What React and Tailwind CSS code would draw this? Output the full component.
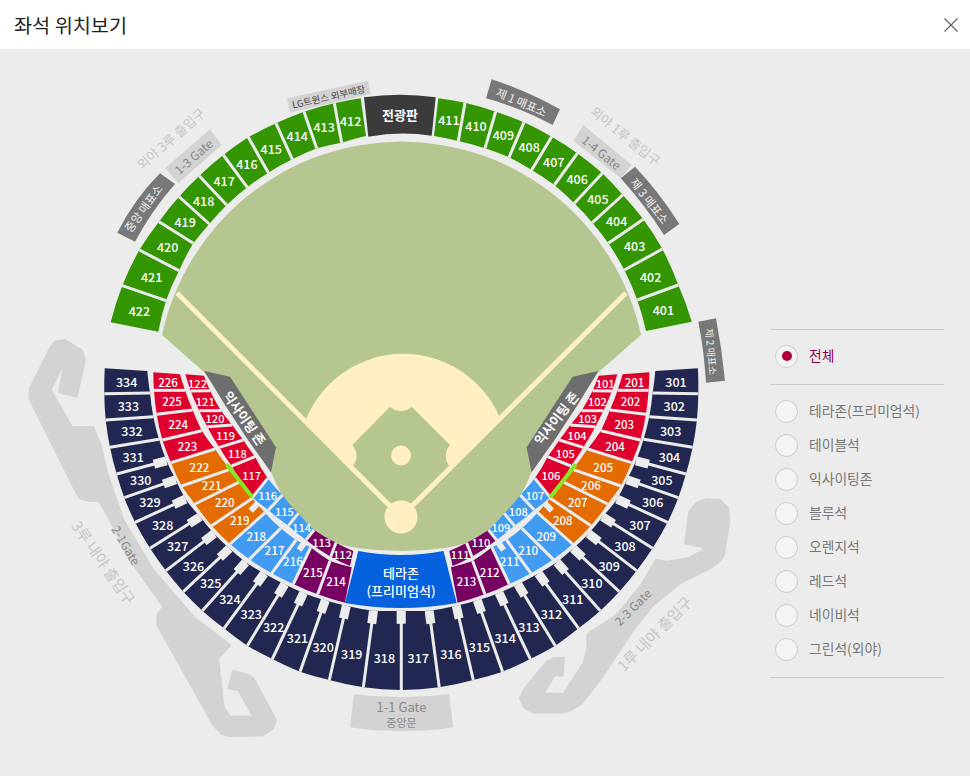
const BG = "#ececec";
const GREEN = "#339600";
const NAVY = "#222752";
const RED = "#e0002e";
const ORANGE = "#e46b00";
const BLUE = "#429bf3";
const PURPLE = "#780062";

const CENTER = [401.3, 380];
const MIRROR = 802.6;

// coordinates below were traced from 3x crops, o = crop origin
const fromCrop = (o) => ([x, y]) => [x / 3 + o[0], y / 3 + o[1]];
const flip = ([x, y]) => [MIRROR - x, y];
const fmt = (p) => `${p[0].toFixed(1)} ${p[1].toFixed(1)}`;

function bulge(a, b) {
  const mid = [(a[0] + b[0]) / 2, (a[1] + b[1]) / 2];
  const dx = mid[0] - CENTER[0];
  const dy = mid[1] - CENTER[1];
  const r = Math.hypot(dx, dy);
  const c = Math.hypot(a[0] - b[0], a[1] - b[1]);
  const k = (c * c) / (4 * r);
  return [mid[0] + (dx / r) * k, mid[1] + (dy / r) * k];
}

function sectionPath(l, r) {
  return `M${fmt(l.o)} Q${fmt(bulge(l.o, r.o))} ${fmt(r.o)} L${fmt(r.i)} Q${fmt(bulge(r.i, l.i))} ${fmt(l.i)} Z`;
}

function toEdges(rows, map) {
  return rows.map(([o, i]) => ({ o: map(o), i: map(i) }));
}

const green422 = toEdges(
  [
    [[32, 727], [175, 755]],
    [[67, 617], [198, 662]],
    [[118, 510], [237, 572]],
    [[177, 425], [280, 490]],
    [[237, 350], [328, 432]],
    [[298, 288], [380, 375]],
    [[370, 225], [442, 322]],
    [[445, 172], [505, 278]],
    [[528, 130], [577, 238]],
    [[612, 95], [650, 205]],
    [[703, 70], [725, 188]],
    [[782, 55], [798, 168]],
  ],
  fromCrop([100, 80]),
);

const green411 = toEdges(
  [
    [[115, 85], [102, 198]],
    [[195, 98], [175, 213]],
    [[287, 125], [255, 235]],
    [[372, 157], [327, 262]],
    [[455, 200], [395, 300]],
    [[532, 250], [463, 345]],
    [[607, 310], [523, 400]],
    [[668, 375], [577, 458]],
    [[730, 448], [625, 520]],
    [[787, 537], [673, 600]],
    [[835, 645], [712, 690]],
    [[875, 755], [738, 783]],
  ],
  fromCrop([400, 70]),
);

const lower = fromCrop([90, 360]);

const midRing = toEdges(
  [
    [[190, 37], [270, 43]],
    [[192, 91], [285, 91]],
    [[200, 163], [308, 150]],
    [[217, 240], [335, 212]],
    [[243, 308], [375, 267]],
    [[275, 378], [420, 328]],
    [[315, 432], [450, 365]],
    [[365, 497], [487, 415]],
    [[420, 552], [525, 458]],
    [[478, 598], [572, 505]],
    [[545, 640], [618, 540]],
    [[610, 672], [662, 562]],
    [[683, 703], [720, 603]],
    [[765, 728], [785, 622]],
  ],
  lower,
);

const innerRing = toEdges(
  [
    [[286, 43], [342, 47]],
    [[302, 93], [360, 92]],
    [[328, 152], [393, 152]],
    [[352, 200], [427, 195]],
    [[388, 262], [460, 240]],
    [[425, 318], [495, 290]],
    [[487, 412], [533, 355]],
    [[535, 450], [577, 405]],
    [[595, 497], [625, 460]],
    [[648, 540], [672, 510]],
    [[722, 590], [738, 548]],
    [[780, 618], [790, 573]],
  ],
  lower,
);

const navyPlain = toEdges(
  [
    [[44, 25], [172, 33]],
    [[43, 101], [180, 99]],
    [[47, 180], [190, 170]],
    [[60, 262], [207, 238]],
  ],
  lower,
);

// outer corner, then centre of the aisle notch
const navyAisles = [
  [[80, 342], [212, 307]],
  [[103, 413], [240, 365]],
  [[135, 487], [270, 425]],
  [[180, 565], [315, 480]],
  [[228, 632], [358, 532]],
  [[280, 695], [405, 578]],
  [[337, 752], [455, 620]],
  [[402, 805], [512, 655]],
  [[472, 857], [575, 688]],
  [[547, 897], [633, 715]],
  [[630, 935], [700, 738]],
  [[718, 960], [765, 755]],
  [[820, 982], [848, 770]],
  [[934, 990], [934, 770]],
].map(([o, n]) => {
  const out = lower(o);
  const notch = lower(n);
  const len = Math.hypot(notch[0] - out[0], notch[1] - out[1]);
  const ux = (notch[0] - out[0]) / len;
  const uy = (notch[1] - out[1]) / len;
  return {
    o: out,
    i: [notch[0] + ux * 6, notch[1] + uy * 6],
    notchEnd: [notch[0] - ux * 7, notch[1] - uy * 7],
  };
});

const navyRing = [...navyPlain, ...navyAisles];

const flipEdges = (edges) =>
  edges.map((e) => ({
    o: flip(e.o),
    i: flip(e.i),
    notchEnd: e.notchEnd && flip(e.notchEnd),
  }));

const nums = (from, to) => {
  const out = [];
  const step = from < to ? 1 : -1;
  for (let n = from; n !== to + step; n += step) out.push(n);
  return out;
};

const midColor = (n) => {
  const k = n > 200 && n < 214 ? 427 - n : n;
  if (k >= 223) return RED;
  if (k >= 219) return ORANGE;
  if (k >= 216) return BLUE;
  return PURPLE;
};

const innerColor = (n) => {
  const k = n < 112 ? 223 - n : n;
  if (k >= 117) return RED;
  if (k >= 114) return BLUE;
  return PURPLE;
};

function Ring({ edges, names, color, sizeClass, gap = 3 }) {
  return (
    <g>
      {names.map((name, idx) => (
        <path key={name} d={sectionPath(edges[idx], edges[idx + 1])} fill={color(name)} />
      ))}
      {edges.slice(1, -1).map((e, idx) => (
        <line key={idx} x1={e.o[0]} y1={e.o[1]} x2={e.i[0]} y2={e.i[1]} stroke={BG} strokeWidth={gap} />
      ))}
      {edges.map(
        (e, idx) =>
          e.notchEnd && (
            <line key={idx} x1={e.i[0]} y1={e.i[1]} x2={e.notchEnd[0]} y2={e.notchEnd[1]} stroke={BG} strokeWidth="9" />
          ),
      )}
      {names.map((name, idx) => {
        const a = edges[idx];
        const b = edges[idx + 1];
        // the aisle notches eat into the inner edge, so those labels sit further out
        const w = a.notchEnd || b.notchEnd ? 0.6 : 0.5;
        const x = (w * (a.o[0] + b.o[0]) + (1 - w) * (a.i[0] + b.i[0])) / 2;
        const y = (w * (a.o[1] + b.o[1]) + (1 - w) * (a.i[1] + b.i[1])) / 2;
        return (
          <text key={name} x={x} y={y} textAnchor="middle" dominantBaseline="central" className={`fill-white font-medium ${sizeClass}`}>
            {name}
          </text>
        );
      })}
    </g>
  );
}

function Tag({ x, y, angle, className, children }) {
  return (
    <text x={x} y={y} transform={`rotate(${angle} ${x} ${y})`} textAnchor="middle" dominantBaseline="central" className={className}>
      {children}
    </text>
  );
}

const pts = (list, map) => list.map((p) => fmt(map(p))).join(" ");

const leftBand = [
  [135, 92], [117, 187], [170, 200], [195, 90], [185, 60], [135, 30], [105, 35], [90, 55],
  [30, 175], [28, 205], [165, 480], [180, 505], [205, 513], [238, 513], [270, 570], [330, 690],
  [430, 830], [412, 855], [412, 885], [580, 1185], [605, 1212], [630, 1218], [730, 1216],
  [760, 1195], [768, 1170], [700, 1045], [685, 1035], [640, 1022], [625, 1075], [655, 1080],
  [700, 1160], [630, 1160], [610, 1130], [595, 985], [630, 945], [520, 860], [400, 720],
  [310, 570], [262, 430], [240, 340], [220, 292], [155, 290], [92, 180],
];

const rightBand = [
  [625, 85], [610, 172], [555, 160], [568, 65], [590, 38], [620, 28], [660, 30], [685, 55],
  [688, 90], [672, 195], [655, 218], [630, 235], [540, 280], [460, 345], [400, 420], [300, 570],
  [245, 640], [215, 660], [185, 668], [100, 668], [72, 652], [60, 625], [72, 598], [140, 515],
  [160, 505], [192, 503], [188, 558], [165, 555], [130, 610], [190, 612], [250, 520], [262, 475],
  [262, 432], [350, 375], [420, 290], [468, 210], [500, 215], [565, 205], [610, 180],
];

const id = (p) => p;
const fieldPath =
  "M162 335 A245 245 0 0 1 641 335 L598.6 372 L531.6 472 Q505 540 445 548 Q401 554 357 548 Q298 540 271 472 L204 372 Z";

const exciteZone = [[204.3, 371], [230, 376.7], [276, 447.3], [271, 472.3], [248, 440], [225, 405]];

function StadiumMap() {
  return (
    <svg viewBox="0 49 770 727" className="h-[727px] w-[770px] shrink-0">
      <polygon points={pts(leftBand, fromCrop([20, 330]))} fill="#d3d3d3" stroke="#d3d3d3" strokeWidth="2" strokeLinejoin="round" />
      <polygon points={pts(rightBand, fromCrop([500, 490]))} fill="#d3d3d3" stroke="#d3d3d3" strokeWidth="2" strokeLinejoin="round" />

      <path d={fieldPath} fill="#b6c690" />
      <path d="M305.7 420 A105 105 0 0 1 500 418 L450 466.7 L401 517 L352.3 466.7 Z" fill="#ffefc2" />
      <path
        d="M352.3 445 L390 406.7 A16 16 0 0 0 411.7 406.7 L450 445 A16 16 0 0 0 450 466.7 L401 517 L352.3 466.7 A16 16 0 0 0 352.3 445 Z"
        fill="#b6c690"
      />
      <line x1="177" y1="293" x2="401" y2="517" stroke="#ffefc2" strokeWidth="5" />
      <line x1="626" y1="293" x2="401" y2="517" stroke="#ffefc2" strokeWidth="5" />
      <circle cx="401" cy="517" r="16.5" fill="#ffefc2" />
      <circle cx="401" cy="455.5" r="10" fill="#ffefc2" />

      <Ring edges={green422} names={nums(422, 412)} color={() => GREEN} sizeClass="text-[12.5px]" />
      <Ring edges={green411} names={nums(411, 401)} color={() => GREEN} sizeClass="text-[12.5px]" />
      <path d="M364 97.3 Q400 92 435.7 97.3 L431.7 135.7 Q400 131 368.3 136.7 Z" fill="#3b3b3b" />
      <text x="400" y="114.5" textAnchor="middle" dominantBaseline="central" className="fill-white text-[13px] font-bold">
        전광판
      </text>

      <polygon points={pts(exciteZone, id)} fill="#6e6e6e" />
      <polygon points={pts(exciteZone, flip)} fill="#6e6e6e" />
      <Tag x={245} y={418} angle={55} className="fill-white text-[13px] font-bold">익사이팅 존</Tag>
      <Tag x={556} y={418} angle={-52} className="fill-white text-[13px] font-bold">익사이팅 존</Tag>

      <Ring edges={navyRing} names={nums(334, 318)} color={() => NAVY} sizeClass="text-[12.5px]" />
      <Ring edges={flipEdges(navyRing)} names={nums(301, 317)} color={() => NAVY} sizeClass="text-[12.5px]" />
      <line x1="401.3" y1="612" x2="401.3" y2="691" stroke={BG} strokeWidth="3" />
      <Ring edges={midRing} names={nums(226, 214)} color={midColor} sizeClass="text-[11.5px]" />
      <Ring edges={flipEdges(midRing)} names={nums(201, 213)} color={midColor} sizeClass="text-[11.5px]" />
      <Ring edges={innerRing} names={nums(122, 112)} color={innerColor} sizeClass="text-[11px]" />
      <Ring edges={flipEdges(innerRing)} names={nums(101, 111)} color={innerColor} sizeClass="text-[11px]" />

      {/* seam between the exciting seats and the orange block */}
      <line x1="226.7" y1="464.3" x2="252.3" y2="497.3" stroke="#86e722" strokeWidth="4" />
      <line x1="575.9" y1="464.3" x2="550.3" y2="497.3" stroke="#86e722" strokeWidth="4" />
      <line x1="257.7" y1="503.3" x2="250.7" y2="510.7" stroke={BG} strokeWidth="6" />
      <line x1="544.9" y1="503.3" x2="551.9" y2="510.7" stroke={BG} strokeWidth="6" />
      <line x1="305" y1="541.7" x2="299" y2="550" stroke={BG} strokeWidth="6" />
      <line x1="497.6" y1="541.7" x2="503.6" y2="550" stroke={BG} strokeWidth="6" />

      <path d="M358.3 551 Q401 559 443.5 551 L456.7 603 Q401 613 345 603 Z" fill="#0561de" />
      <text x="401" y="572" textAnchor="middle" dominantBaseline="central" className="fill-white text-[13px] font-medium">
        테라존
      </text>
      <text x="401" y="590" textAnchor="middle" dominantBaseline="central" className="fill-white text-[13px] font-medium">
        (프리미엄석)
      </text>

      <polygon points="286.7,98.3 368.3,80.7 370.7,94 290,112.7" fill="#d3d3d3" />
      <Tag x={328.5} y={96.5} angle={-12.5} className="fill-[#444444] text-[9.5px]">LG트윈스 외부매장</Tag>

      <path d="M160 173.3 L175 184 Q152 210 135 241.7 L117.3 232.7 Q135 198 160 173.3 Z" fill="#787878" />
      <Tag x={143} y={208} angle={-54} className="fill-[#eeeeee] text-[11.5px]">중앙 매표소</Tag>
      <polygon points="165,168.3 210,129.3 221.7,145 178.3,183.3" fill="#d3d3d3" />
      <Tag x={193} y={156} angle={-41} className="fill-[#888888] text-[12px]">1-3 Gate</Tag>
      <Tag x={170.7} y={138.3} angle={-41} className="fill-[#c6c6c6] text-[13px]">외야 3루 출입구</Tag>

      <path d="M491.7 79.3 Q527 91 560 109.3 L552.7 125 Q521 108 486 98.3 Z" fill="#787878" />
      <Tag x={521.7} y={101.7} angle={23} className="fill-[#eeeeee] text-[11.5px]">제 1 매표소</Tag>
      <polygon points="583.3,125 631.7,165 620.7,178.3 573.3,140.7" fill="#d3d3d3" />
      <Tag x={602} y={152} angle={39} className="fill-[#888888] text-[12px]">1-4 Gate</Tag>
      <Tag x={625.7} y={135.7} angle={39} className="fill-[#c6c6c6] text-[13px]">외야 1루 출입구</Tag>
      <path d="M635 166.7 Q660 193 679.3 224 L664 235 Q645 205 620.7 178.3 Z" fill="#787878" />
      <Tag x={650} y={200.7} angle={52} className="fill-[#eeeeee] text-[11.5px]">제 3 매표소</Tag>
      <path d="M698.3 321.7 L716 318.3 Q722 350 725 380.7 L706 382.7 Q704 350 698.3 321.7 Z" fill="#787878" />
      <Tag x={711.7} y={351.7} angle={85} className="fill-[#eeeeee] text-[10px]">제 2 매표소</Tag>

      <Tag x={126.7} y={545} angle={60} className="fill-[#888888] text-[12px]">2-1Gate</Tag>
      <Tag x={104} y={562.3} angle={55} className="fill-[#c6c6c6] text-[15px]">3루 내야 출입구</Tag>
      <Tag x={632.3} y={606.7} angle={-45} className="fill-[#888888] text-[12px]">2-3 Gate</Tag>
      <Tag x={654} y={633.3} angle={-45} className="fill-[#c6c6c6] text-[15px]">1루 내야 출입구</Tag>

      <path d="M354 694.3 Q401.7 700 449 694.3 L453.3 727.3 Q401.7 735 350 727.3 Z" fill="#d3d3d3" />
      <text x="401.5" y="706" textAnchor="middle" dominantBaseline="central" className="fill-[#888888] text-[13px]">
        1-1 Gate
      </text>
      <text x="401.5" y="722" textAnchor="middle" dominantBaseline="central" className="fill-[#888888] text-[11px]">
        중앙문
      </text>
    </svg>
  );
}

const SEATS = ["테라존(프리미엄석)", "테이블석", "익사이팅존", "블루석", "오렌지석", "레드석", "네이비석", "그린석(외야)"];

function Radio({ label, checked }) {
  return (
    <div className="flex h-[34px] items-center pl-[5px]">
      <span className="flex h-[23px] w-[23px] shrink-0 items-center justify-center rounded-full border border-[#cccccc] bg-[#f4f4f4]">
        {checked && <span className="h-[10px] w-[10px] rounded-full bg-[#b0003a]" />}
      </span>
      <span className={`ml-[11px] -mt-[2px] text-[13.8px] ${checked ? "text-[#8c0050]" : "text-[#777777]"}`}>{label}</span>
    </div>
  );
}

export default function App() {
  return (
    <div className="h-[776px] w-[970px] overflow-hidden bg-[#ececec] font-['Noto_Sans_CJK_KR','Noto_Sans',sans-serif]">
      <header className="flex h-[49px] items-center justify-between bg-white pl-[14px] pr-[12px]">
        <h1 className="text-[19.7px] font-normal text-[#222222]">좌석 위치보기</h1>
        <svg viewBox="0 0 14 14" className="h-[14px] w-[14px]" fill="none" stroke="#666666" strokeWidth="1.3">
          <path d="M0.5 0.5 L13.5 13.5 M13.5 0.5 L0.5 13.5" />
        </svg>
      </header>
      <div className="flex">
        <StadiumMap />
        <aside className="w-[174px] pt-[280px]">
          <div className="border-t border-[#cccccc] pt-[9px] pb-[11px]">
            <Radio label="전체" checked />
          </div>
          <div className="border-y border-[#cccccc] pt-[9px] pb-[11px]">
            {SEATS.map((seat) => (
              <Radio key={seat} label={seat} />
            ))}
          </div>
        </aside>
      </div>
    </div>
  );
}
